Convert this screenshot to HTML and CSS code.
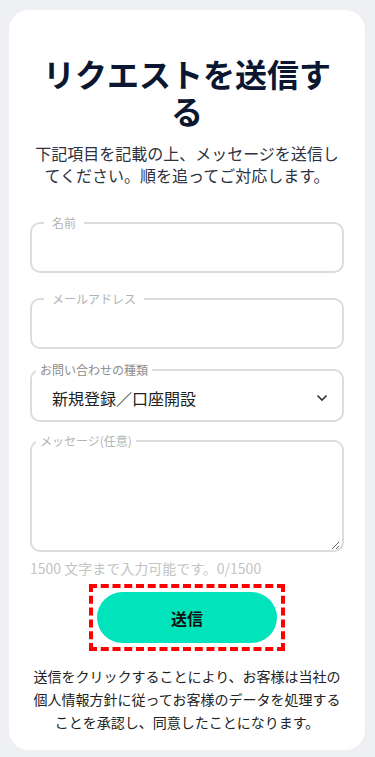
FILE: index.html
```html
<!DOCTYPE html>
<html lang="ja">

<head>
  <meta charset="utf-8" />
  <meta name="viewport" content="width=device-width, initial-scale=1.0" />
  <title>リクエストを送信する</title>
  <link rel="stylesheet" href="styles.css">
</head>

<body>
  <div class="card">
    <h1>リクエストを送信する</h1>
    <p class="lead">下記項目を記載の上、メッセージを送信してください。順を追ってご対応します。</p>

    <form class="request-form">
      <fieldset class="field field-name">
        <legend>名前</legend>
        <input type="text" name="name">
      </fieldset>

      <fieldset class="field field-email">
        <legend>メールアドレス</legend>
        <input type="email" name="email">
      </fieldset>

      <fieldset class="field field-select">
        <legend>お問い合わせの種類</legend>
        <div class="select-row">
          <span>新規登録／口座開設</span>
          <svg width="12" height="8" viewBox="0 0 12 8">
            <path d="M1.5 1.5 6 6l4.5-4.5" fill="none" stroke="#333" stroke-width="1.6" />
          </svg>
        </div>
      </fieldset>

      <fieldset class="field field-message">
        <legend>メッセージ(任意)</legend>
        <textarea name="message"></textarea>
      </fieldset>

      <p class="counter">1500 文字まで入力可能です。0/1500</p>

      <div class="submit-wrap">
        <button type="button" class="submit">送信</button>
      </div>
    </form>

    <p class="note">送信をクリックすることにより、お客様は当社の個人情報方針に従ってお客様のデータを処理することを承認し、同意したことになります。</p>
  </div>
</body>

</html>
```

FILE: styles.css
```css
* {
  box-sizing: border-box;
}

body {
  margin: 0;
  background: #eef0f4;
  font-family: "Noto Sans CJK JP", "Noto Sans", sans-serif;
  color: #222;
}

.card {
  width: 356px;
  height: 740px;
  margin: 10px 0 0 9px;
  padding: 45px 21px 0;
  background: #fff;
  border-radius: 20px;
}

h1 {
  margin: 0;
  font-size: 32px;
  line-height: 37px;
  font-weight: 700;
  color: #0b1630;
  text-align: center;
}

.lead {
  margin: 13px 0 0;
  font-size: 16px;
  line-height: 22px;
  color: #2e3140;
  text-align: center;
}

.request-form {
  margin-top: 30px;
}

.field {
  margin: 0;
  padding: 0 20px;
  border: 2px solid #dcdcdc;
  border-radius: 10px;
}

.field legend {
  font-size: 12px;
  line-height: 14px;
  color: #b3b3b3;
  padding: 0 8px;
  margin-left: -8px;
}

.field input,
.field textarea {
  display: block;
  width: 100%;
  border: 0;
  outline: 0;
  background: transparent;
  font: inherit;
  padding: 0;
}

.field-name input,
.field-email input {
  height: 41px;
}

.field-email {
  margin-top: 19px;
}

.field-select {
  margin-top: 14px;
}

.field-select legend {
  color: #8c8c8c;
  padding: 0 4px;
  margin-left: -16px;
}

.select-row {
  display: flex;
  align-items: center;
  justify-content: space-between;
  height: 43px;
  padding-bottom: 2px;
  font-size: 16px;
  color: #222;
}

.select-row svg {
  margin-right: -6px;
}

.field-message {
  margin-top: 12px;
  padding: 0 2px 0 20px;
}

.field-message legend {
  padding: 0 4px;
  margin-left: -16px;
}

.field-message textarea {
  height: 102px;
  resize: vertical;
}

.counter {
  margin: 7px 0 0;
  font-size: 14px;
  line-height: 19px;
  color: #c4c4c4;
}

.submit-wrap {
  width: 196px;
  margin: 6px auto 0;
  padding: 4px;
  border: 4px dashed #ff0000;
}

.submit {
  display: block;
  width: 180px;
  height: 51px;
  border: 0;
  border-radius: 26px;
  background: #00e3bb;
  font-family: inherit;
  font-size: 16px;
  font-weight: 700;
  color: #111;
}

.note {
  margin: 14px 0 0;
  font-size: 14px;
  line-height: 23px;
  color: #222;
  text-align: center;
}
```
